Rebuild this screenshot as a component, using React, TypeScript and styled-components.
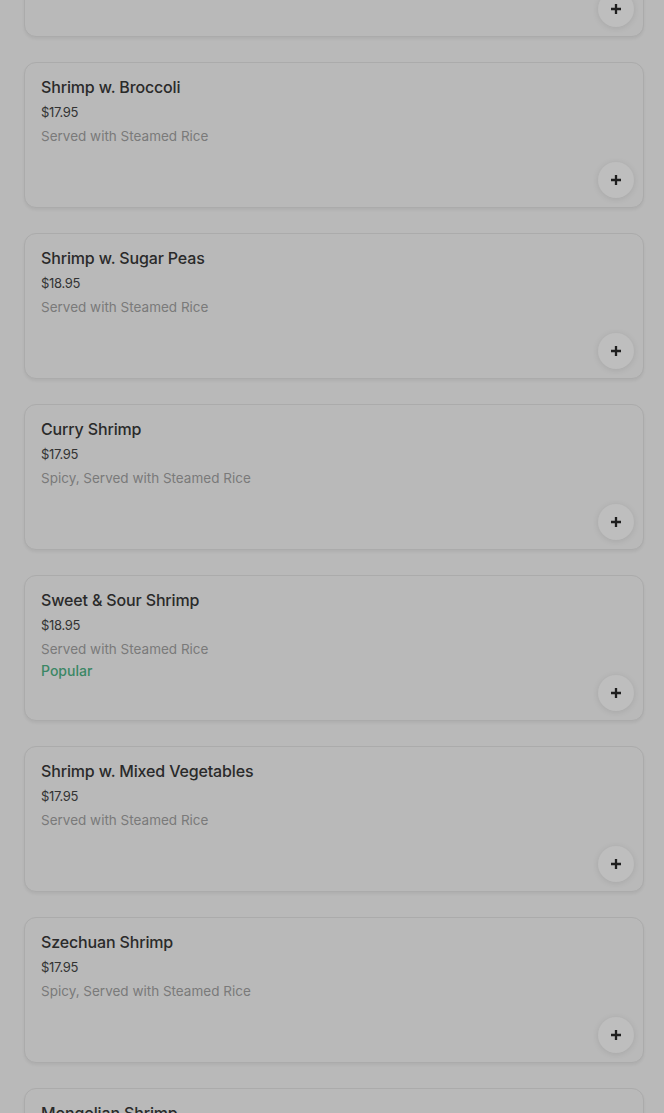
import React from "react";
import styled, { createGlobalStyle } from "styled-components";

const Global = createGlobalStyle`
  html, body { margin: 0; padding: 0; background: #b9b9b9; height: 100%; }
  body { font-family: Inter, Roboto, "Liberation Sans", Arial, sans-serif; overflow: hidden; }
`;

const List = styled.div`
  display: flex;
  flex-direction: column;
  gap: 25px;
  padding: 0 20px 0 24px;
  margin-top: -109.5px;
`;

const Card = styled.div`
  display: grid;
  grid-template: 1fr / 1fr;
  flex: 0 0 auto;
  height: 146px;
  box-sizing: border-box;
  border: 1px solid #ababab;
  border-radius: 12px;
  background: #b9b9b9;
  box-shadow: 0 2px 3px rgba(0, 0, 0, 0.06);
  padding: 13.5px 9px 8.5px 16px;
`;

const Info = styled.div`
  grid-area: 1 / 1;
  display: flex;
  flex-direction: column;
`;

const Title = styled.div`
  font-size: 16px;
  font-weight: 500;
  line-height: 22px;
  color: #2a2a2a;
  letter-spacing: -0.15px;
`;

const Price = styled.div`
  margin-top: 2px;
  font-size: 13px;
  line-height: 24px;
  color: #333;
  letter-spacing: -0.3px;
`;

const Desc = styled.div`
  font-size: 13.5px;
  line-height: 24px;
  color: #7a7a7a;
`;

const Tag = styled.div`
  font-size: 14px;
  font-weight: 500;
  line-height: 20px;
  color: #3b8765;
`;

const AddButton = styled.button`
  grid-area: 1 / 1;
  align-self: end;
  justify-self: end;
  width: 36px;
  height: 36px;
  border-radius: 50%;
  border: none;
  background: #bebebe;
  box-shadow: 0 1px 6px rgba(0, 0, 0, 0.1);
  display: flex;
  align-items: center;
  justify-content: center;
  padding: 0;
  cursor: pointer;
`;

const Plus = () => (
  <svg width="12" height="12" viewBox="0 0 12 12">
    <path d="M6 1v10M1 6h10" stroke="#1f1f1f" strokeWidth="2.3" strokeLinecap="butt" />
  </svg>
);

type Item = { name: string; price: string; desc: string; tag?: string };

const items: Item[] = [
  { name: "Shrimp w. Lobster Sauce", price: "$17.95", desc: "Served with Steamed Rice" },
  { name: "Shrimp w. Broccoli", price: "$17.95", desc: "Served with Steamed Rice" },
  { name: "Shrimp w. Sugar Peas", price: "$18.95", desc: "Served with Steamed Rice" },
  { name: "Curry Shrimp", price: "$17.95", desc: "Spicy, Served with Steamed Rice" },
  { name: "Sweet & Sour Shrimp", price: "$18.95", desc: "Served with Steamed Rice", tag: "Popular" },
  { name: "Shrimp w. Mixed Vegetables", price: "$17.95", desc: "Served with Steamed Rice" },
  { name: "Szechuan Shrimp", price: "$17.95", desc: "Spicy, Served with Steamed Rice" },
  { name: "Mongolian Shrimp", price: "$17.95", desc: "Spicy, Served with Steamed Rice" },
];

export default function App() {
  return (
    <>
      <Global />
      <List>
        {items.map((it) => (
          <Card key={it.name}>
            <Info>
              <Title>{it.name}</Title>
              <Price>{it.price}</Price>
              <Desc>{it.desc}</Desc>
              {it.tag && <Tag>{it.tag}</Tag>}
            </Info>
            <AddButton aria-label="Add">
              <Plus />
            </AddButton>
          </Card>
        ))}
      </List>
    </>
  );
}
